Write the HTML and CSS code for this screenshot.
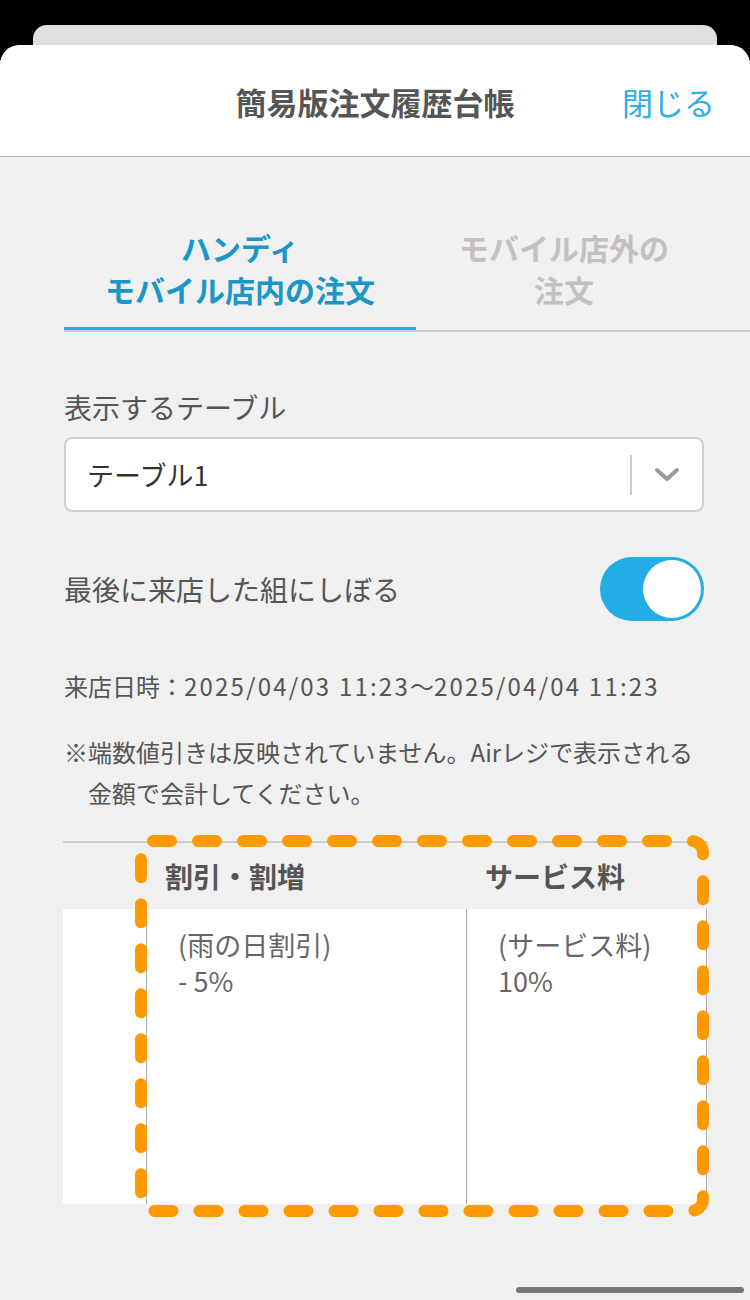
FILE: index.html
```html
<!DOCTYPE html>
<html lang="ja">
<head>
<meta charset="utf-8">
<title>簡易版注文履歴台帳</title>
<link rel="stylesheet" href="styles.css">
</head>
<body>
<div class="stack"></div>
<div class="sheet">
  <header class="bar">
    <div class="bar-side"></div>
    <h1 class="bar-title">簡易版注文履歴台帳</h1>
    <div class="bar-side bar-right"><span class="close">閉じる</span></div>
  </header>
  <main class="content">
    <nav class="tabs">
      <div class="tab tab-active">ハンディ<br>モバイル店内の注文</div>
      <div class="tab tab-other">モバイル店外の<br>注文</div>
    </nav>
    <section class="form">
      <div class="label">表示するテーブル</div>
      <div class="select">
        <span class="select-value">テーブル1</span>
        <span class="select-divider"></span>
        <svg class="chevron" width="26" height="16" viewBox="0 0 26 16"><path d="M3 3 L13 12 L23 3" fill="none" stroke="#9a9a9a" stroke-width="4" stroke-linecap="round" stroke-linejoin="round"/></svg>
      </div>
      <div class="toggle-row">
        <span class="label">最後に来店した組にしぼる</span>
        <span class="toggle"><span class="knob"></span></span>
      </div>
      <p class="date">来店日時：<span class="num">2025/04/03 11:23</span>〜<span class="num">2025/04/04 11:23</span></p>
      <p class="note">※端数値引きは反映されていません。Airレジで表示される金額で会計してください。</p>
    </section>
    <section class="table">
      <div class="thead">
        <div class="c c0"></div>
        <div class="c c1 th">割引・割増</div>
        <div class="c c2 th">サービス料</div>
      </div>
      <div class="tbody">
        <div class="c c0 td"></div>
        <div class="c c1 td">(雨の日割引)<br>- 5%</div>
        <div class="c c2 td">(サービス料)<br>10%</div>
      </div>
      <svg class="highlight" width="590" height="396" viewBox="0 0 590 396">
        <rect x="6" y="6" width="562" height="370" rx="12" ry="12" fill="none" stroke="#ff9900" stroke-width="12" stroke-dasharray="18 27" stroke-linecap="round"/>
      </svg>
    </section>
  </main>
  <div class="home-indicator"></div>
</div>
</body>
</html>
```
FILE: styles.css
```css
html, body {
  margin: 0;
  padding: 0;
}
body {
  background: #000;
  width: 750px;
  height: 1300px;
  overflow: hidden;
  font-family: "Noto Sans CJK JP", "Noto Sans", sans-serif;
  color: #555;
}
.stack {
  margin: 25px 33px 0;
  height: 20px;
  background: #e0e0e0;
  border-radius: 14px 14px 0 0;
}
.sheet {
  position: relative;
  background: #f0f0f0;
  border-radius: 20px 20px 0 0;
  height: 1255px;
  overflow: hidden;
}
.bar {
  height: 111px;
  background: #fff;
  border-bottom: 1px solid #b3b3b3;
  display: grid;
  grid-template-columns: 1fr auto 1fr;
  align-items: center;
}
.bar-title {
  margin: 0;
  font-size: 31px;
  font-weight: 700;
  color: #555;
  line-height: 40px;
  padding-top: 2px;
}
.bar-right {
  display: flex;
  justify-content: flex-end;
  padding-right: 35px;
}
.close {
  font-size: 31px;
  color: #2eaee6;
  line-height: 40px;
  padding-top: 2px;
}
.tabs {
  margin-left: 64px;
  display: flex;
  border-bottom: 2px solid #cccccc;
}
.tab {
  box-sizing: border-box;
  padding: 69px 0 17px;
  font-size: 30px;
  font-weight: 700;
  line-height: 42px;
  text-align: center;
  border-bottom: 3px solid transparent;
}
.tab-active {
  width: 352px;
  color: #1a96c9;
  border-bottom-color: #22ade3;
}
.tab-other {
  width: 296px;
  color: #c4bfc2;
}
.form {
  padding: 0 46px 0 64px;
}
.label {
  font-size: 28px;
  line-height: 40px;
  color: #555;
}
.form > .label {
  margin-top: 55px;
}
.select {
  margin-top: 10px;
  height: 75px;
  box-sizing: border-box;
  background: #fff;
  border: 2px solid #cfcfcf;
  border-radius: 8px;
  display: flex;
  align-items: center;
  padding-left: 21px;
}
.select-value {
  flex: 1;
  font-size: 27px;
  color: #333;
}
.select-divider {
  width: 2px;
  height: 40px;
  background: #cccccc;
}
.chevron {
  margin: 0 22px 0 22px;
}
.toggle-row {
  margin-top: 45px;
  display: flex;
  align-items: center;
  justify-content: space-between;
}
.toggle {
  width: 104px;
  height: 64px;
  border-radius: 32px;
  background: #22aee4;
  display: flex;
  align-items: center;
  justify-content: flex-end;
  padding-right: 3px;
  box-sizing: border-box;
}
.knob {
  width: 58px;
  height: 58px;
  border-radius: 50%;
  background: #fff;
}
.date {
  margin: 45px 0 0;
  font-size: 24px;
  line-height: 40px;
  color: #555;
}
.num {
  letter-spacing: 2.2px;
}
.note {
  margin: 25px 0 0;
  font-size: 24px;
  line-height: 41px;
  color: #555;
  padding-left: 24px;
  text-indent: -24px;
  padding-right: 0;
}
.table {
  position: relative;
  margin: 28px 42px 0 63px;
  border-top: 2px solid #cccccc;
}
.thead, .tbody {
  display: grid;
  grid-template-columns: 84px 320px 240px;
}
.thead {
  height: 66px;
  align-items: center;
}
.th {
  font-size: 28px;
  font-weight: 700;
  color: #555;
  padding-left: 18px;
  line-height: 36px;
}
.tbody {
  height: 295px;
  background: #fff;
}
.td {
  border-right: 1px solid #aaaaaa;
  font-size: 27px;
  line-height: 36px;
  color: #666;
  padding-top: 18px;
}
.td.c1, .td.c2 {
  padding-left: 31px;
}
.highlight {
  position: absolute;
  left: 72px;
  top: -8px;
}
.home-indicator {
  position: absolute;
  right: 6px;
  bottom: 7px;
  width: 228px;
  height: 6px;
  border-radius: 3px;
  background: #777;
}
```
